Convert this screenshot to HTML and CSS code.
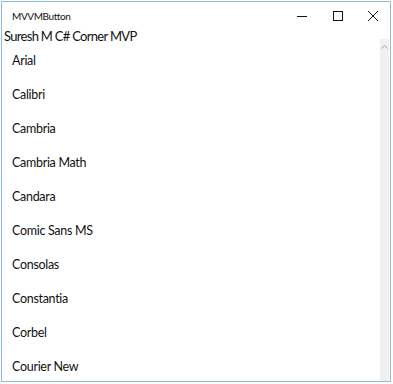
FILE: index.html
```html
<!DOCTYPE html>
<html>
<head>
<meta charset="utf-8">
<link rel="stylesheet" href="styles.css">
</head>
<body>
<div class="window">
  <div class="titlebar">
    <span class="title">MVVMButton</span>
    <div class="controls">
      <span class="ctl"><svg width="10" height="10" viewBox="0 0 10 10"><path d="M0 5.5H10" stroke="#111" stroke-width="1"/></svg></span>
      <span class="ctl"><svg width="10" height="10" viewBox="0 0 10 10"><rect x="0.5" y="0.5" width="9" height="9" fill="none" stroke="#111" stroke-width="1"/></svg></span>
      <span class="ctl"><svg width="10" height="10" viewBox="0 0 10 10"><path d="M0 0L10 10M10 0L0 10" stroke="#111" stroke-width="1"/></svg></span>
    </div>
  </div>
  <div class="heading">Suresh M C# Corner MVP</div>
  <div class="content">
    <ul class="list">
      <li>Arial</li>
      <li>Calibri</li>
      <li>Cambria</li>
      <li>Cambria Math</li>
      <li>Candara</li>
      <li>Comic Sans MS</li>
      <li>Consolas</li>
      <li>Constantia</li>
      <li>Corbel</li>
      <li>Courier New</li>
    </ul>
    <div class="scrollbar">
      <svg class="up" width="7" height="4" viewBox="0 0 7 4"><path d="M0.5 3.5L3.5 0.5L6.5 3.5" fill="none" stroke="#9a9a9a" stroke-width="1"/></svg>
    </div>
  </div>
</div>
</body>
</html>
```

FILE: styles.css
```css
html, body {
  margin: 0;
  padding: 0;
  background: #ffffff;
}
body {
  padding: 1px 0 0 1px;
  font-family: Lato, "Noto Sans", sans-serif;
  color: #1a1a1a;
}
.window {
  width: 388px;
  height: 379px;
  border: 1px solid #8cbde2;
  background: #fff;
  display: flex;
  flex-direction: column;
  overflow: hidden;
}
.titlebar {
  height: 27px;
  display: flex;
  align-items: center;
  justify-content: space-between;
  flex: none;
}
.title {
  font-size: 10px;
  letter-spacing: -0.4px;
  padding-left: 10px;
  color: #111;
}
.controls {
  display: flex;
}
.ctl {
  width: 36px;
  height: 27px;
  display: flex;
  align-items: center;
  justify-content: center;
}
.ctl:last-child { width: 34px; }
.heading {
  font-size: 13px;
  letter-spacing: -0.7px;
  line-height: 14px;
  padding-left: 2px;
  flex: none;
  color: #111;
}
.content {
  flex: 1;
  display: flex;
  min-height: 0;
}
.list {
  list-style: none;
  margin: 0;
  padding: 1px 0 0 0;
  flex: 1;
}
.list li {
  height: 34px;
  line-height: 34px;
  font-size: 12.5px;
  letter-spacing: -0.3px;
  padding-left: 10px;
  color: #111;
}
.scrollbar {
  width: 9px;
  margin-right: 1px;
  margin-top: -4px;
  background: #f0f0f0;
  display: flex;
  justify-content: center;
  padding-top: 6px;
  box-sizing: border-box;
}
.up { display: block; }
```
